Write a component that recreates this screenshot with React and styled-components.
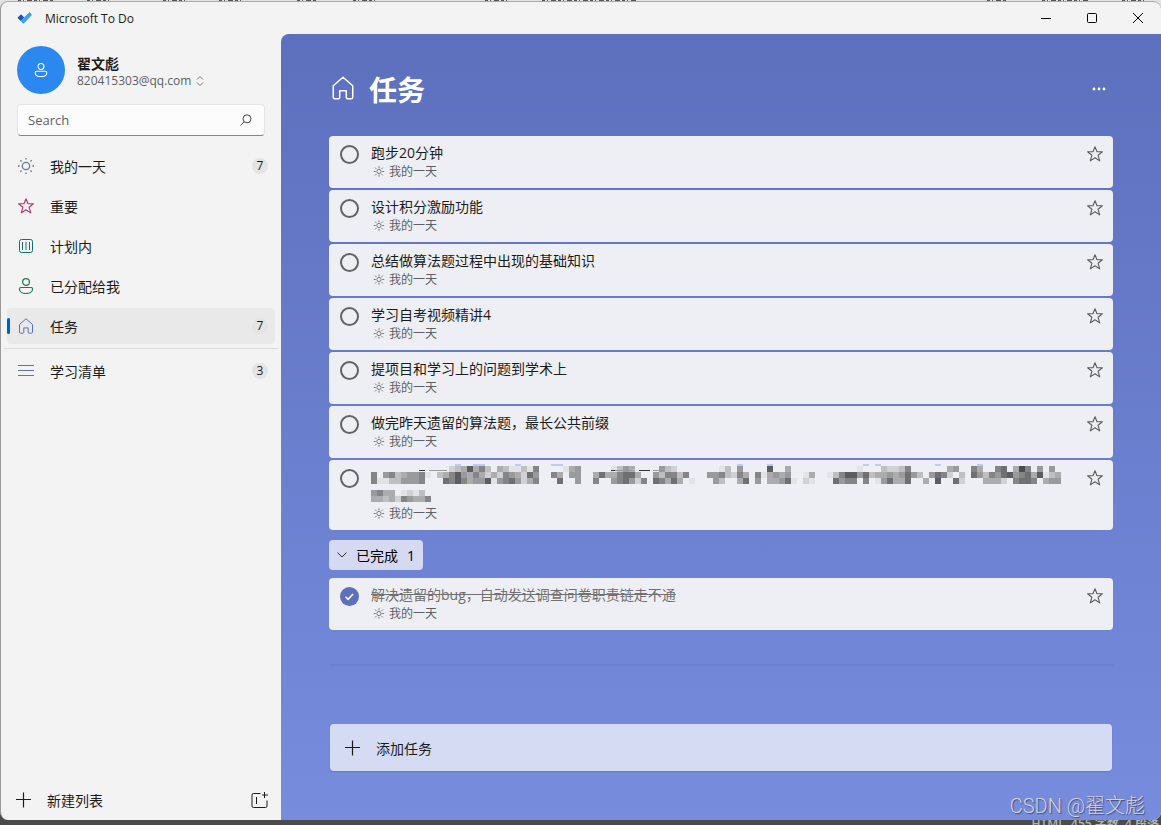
import React, {useState} from 'react';
import styled, {createGlobalStyle} from 'styled-components';

const GlobalStyle = createGlobalStyle`
  * {
    box-sizing: border-box;
  }
  body {
    margin: 0;
    font-family: "Open Sans", "Noto Sans CJK SC", sans-serif;
    font-size: 14px;
    color: #1b1b1b;
  }
  button, input {
    font: inherit;
    color: inherit;
  }
  button {
    padding: 0;
    border: none;
    background: none;
    cursor: pointer;
  }
`;

const Desktop = styled.div`
  display: flex;
  flex-direction: column;
  min-height: 100vh;
  background: linear-gradient(#e2e2e2 50%, #4b4b4b 50%);
`;

const TopStrip = styled.div`
  height: 1px;
  overflow: hidden;
`;

const BottomStrip = styled.div`
  display: flex;
  justify-content: flex-end;
  height: 5px;
  padding-right: 2px;
  overflow: hidden;
  font-size: 12px;
  font-weight: 600;
  line-height: 8px;
  color: #b4b4b4;
  white-space: pre;
`;

const Window = styled.div`
  position: relative;
  flex: 1;
  display: flex;
  flex-direction: column;
  border-top: 1px solid #aaa;
  border-left: 1px solid #999;
  border-radius: 8px;
  background: #f3f3f3;
  overflow: hidden;
`;

const TitleBar = styled.header`
  display: flex;
  align-items: center;
  height: 32px;
  padding-left: 16px;
  font-size: 12px;
`;

const AppName = styled.span`
  flex: 1;
  margin-left: 12px;
`;

const WindowButton = styled.button`
  display: flex;
  align-items: center;
  justify-content: center;
  width: 46px;
  height: 32px;
`;

const Body = styled.div`
  flex: 1;
  display: flex;
`;

const Sidebar = styled.aside`
  flex: none;
  display: flex;
  flex-direction: column;
  width: 280px;
  padding: 12px 6px 0;
`;

const Account = styled.button`
  display: flex;
  align-items: center;
  gap: 12px;
  margin: 0 10px;
  text-align: left;
`;

const Avatar = styled.span`
  display: flex;
  align-items: center;
  justify-content: center;
  width: 48px;
  height: 48px;
  border-radius: 50%;
  background: #2b88f0;
`;

const UserName = styled.strong`
  display: block;
  padding-top: 3px;
  font-size: 14px;
  line-height: 18px;
`;

const Email = styled.span`
  display: flex;
  align-items: center;
  gap: 4px;
  font-size: 12px;
  line-height: 16px;
  color: #606060;
`;

const SearchBox = styled.label`
  display: flex;
  align-items: center;
  height: 32px;
  margin: 10px 10px 12px;
  padding: 0 12px 0 10px;
  border: 1px solid #e5e5e5;
  border-bottom-color: #868686;
  border-radius: 4px;
  background: #fcfcfc;
`;

const SearchInput = styled.input`
  flex: 1;
  min-width: 0;
  padding: 0;
  border: none;
  outline: none;
  background: none;
  font-size: 13px;
  &::placeholder {
    color: #606060;
    opacity: 1;
  }
`;

const Nav = styled.nav`
  flex: 1;
  display: flex;
  flex-direction: column;
  gap: 4px;
`;

const NavItem = styled.a`
  position: relative;
  display: flex;
  align-items: center;
  gap: 16px;
  height: 36px;
  padding: 0 7px 0 11px;
  border-radius: 4px;
  background: ${p => (p.$active ? '#e9e9e9' : 'transparent')};
  color: inherit;
  text-decoration: none;
  &::before {
    content: "";
    position: absolute;
    left: 0;
    width: 3px;
    height: 16px;
    border-radius: 2px;
    background: ${p => (p.$active ? '#005fb8' : 'transparent')};
  }
`;

const NavLabel = styled.span`
  flex: 1;
`;

const Count = styled.span`
  width: 16px;
  height: 16px;
  border-radius: 50%;
  background: #e4e4e4;
  font-size: 12px;
  line-height: 16px;
  text-align: center;
`;

const Divider = styled.hr`
  width: calc(100% + 6px);
  height: 1px;
  margin: 0 -3px;
  border: none;
  background: #dcdcdc;
`;

const SidebarFooter = styled.div`
  display: flex;
  align-items: center;
  justify-content: space-between;
  height: 40px;
  padding: 0 7px 0 8px;
`;

const NewList = styled.button`
  display: flex;
  align-items: center;
  gap: 16px;
`;

const NewGroup = styled.button`
  display: flex;
`;

const Main = styled.main`
  flex: 1;
  display: flex;
  flex-direction: column;
  padding: 36px 48px 49px;
  border-top-left-radius: 8px;
  background: linear-gradient(#5c70be, #788cde);
`;

const Heading = styled.div`
  display: flex;
  align-items: center;
  gap: 14px;
  height: 36px;
  margin-bottom: 30px;
  padding: 0 6px 0 2px;
  color: #fff;
`;

const Title = styled.h1`
  flex: 1;
  margin: 0;
  padding-top: 4px;
  font-size: 28px;
  line-height: 40px;
  font-weight: 700;
`;

const MoreButton = styled.button`
  display: flex;
`;

const TaskList = styled.ul`
  display: flex;
  flex-direction: column;
  gap: 2px;
  margin: 0;
  padding: 0;
  list-style: none;
`;

const TaskCard = styled.li`
  display: flex;
  align-items: flex-start;
  padding: 8px 10px 7px 11px;
  border-radius: 4px;
  background: #eeeff4;
`;

const Check = styled.input`
  appearance: none;
  flex: none;
  width: 19px;
  height: 19px;
  margin: 1px 12px 0 0;
  border: 2px solid #636363;
  border-radius: 50%;
  &:checked {
    border: none;
    background: #5c70be url("data:image/svg+xml,%3Csvg xmlns='http://www.w3.org/2000/svg' viewBox='0 0 19 19'%3E%3Cpath d='M5.5 9.8l2.6 2.6 5-5.4' fill='none' stroke='white' stroke-width='1.6'/%3E%3C/svg%3E");
  }
`;

const TaskText = styled.label`
  flex: 1;
  min-width: 0;
`;

const TaskName = styled.span`
  display: block;
  line-height: 18px;
  color: ${p => (p.$done ? '#707070' : 'inherit')};
  text-decoration: ${p => (p.$done ? 'line-through' : 'none')};
`;

const TaskMeta = styled.span`
  display: flex;
  align-items: center;
  gap: 4px;
  padding: 1px 0 0 2px;
  font-size: 12px;
  line-height: 18px;
  color: #606060;
`;

const StarButton = styled.button`
  display: flex;
  margin-top: 2px;
`;

const CompletedToggle = styled.button`
  align-self: flex-start;
  display: flex;
  align-items: center;
  gap: 9px;
  height: 30px;
  margin: 10px 0 8px;
  padding: 0 8px;
  border-radius: 4px;
  background: #d5daf2;
  color: #000;
`;

const Rule = styled.hr`
  width: 100%;
  height: 2px;
  margin: 34px 0 0;
  border: none;
  background: #6b80d2;
`;

const AddTask = styled.button`
  display: flex;
  align-items: center;
  gap: 16px;
  height: 47px;
  margin: auto 1px 0;
  padding: 0 14px;
  border-radius: 4px;
  background: #d6dbf4;
  box-shadow: 0 1px 1px rgba(0, 0, 0, 0.12);
`;

const Watermark = styled.span`
  position: absolute;
  right: 16px;
  bottom: 2px;
  font-family: Roboto, "Noto Sans CJK SC", sans-serif;
  font-size: 20px;
  font-weight: 300;
  line-height: 24px;
  color: #d3d5e2;
  text-shadow: 1px 1px 1px #444a70;
`;

const Icon = ({size = 16, box = 16, color = 'currentColor', width = 1, children}) => (
  <svg width={size} height={size} viewBox={`0 0 ${box} ${box}`} fill="none" stroke={color} strokeWidth={width} aria-hidden="true">
    {children}
  </svg>
);

const SunIcon = () => (
  <Icon color="#6b7a8c" width={1.3}>
    <circle cx="8" cy="8" r="3.7" />
    <path d="M8 0v1.600M8 14.400V16M0 8h1.600M14.400 8H16M2.300 2.300l1.200 1.200M12.500 12.500l1.200 1.200M13.700 2.300l-1.200 1.200M3.500 12.500l-1.200 1.200" />
  </Icon>
);

const SmallSunIcon = () => (
  <Icon size={12} box={12} color="#6a6a6a" width={0.9}>
    <circle cx="6" cy="5.500" r="2.100" />
    <path d="M6 .3v2M6 8.700v2M.8 5.500h2M9.200 5.500h2M2.100 1.600l1.500 1.500M8.400 7.900l1.500 1.500M9.900 1.600L8.400 3.100M3.600 7.900L2.100 9.400" />
  </Icon>
);

const StarIcon = ({color = '#5c5c5c'}) => (
  <Icon color={color} width={1.1}>
    <path strokeLinejoin="round" d="M8 .8l2 5h5.400l-4.300 3.500 1.600 5.600L8 11.700l-4.700 3.200 1.600-5.600L.6 5.800H6z" />
  </Icon>
);

const PlanIcon = () => (
  <Icon color="#14706b">
    <rect x="1.500" y="1.500" width="13" height="13" rx="2" />
    <path d="M4.500 4v8M8 4v8M11.500 4v8" />
  </Icon>
);

const PersonIcon = ({size, color = '#217a50'}) => (
  <Icon size={size} color={color} width={1.2}>
    <circle cx="8" cy="4" r="3.400" />
    <path d="M3 9.500h10c1 0 1.600.6 1.600 1.500 0 2.800-3 4.500-6.600 4.500S1.400 13.800 1.400 11c0-.9.600-1.500 1.600-1.500z" />
  </Icon>
);

const HomeIcon = ({size, color = '#5c70be', width}) => (
  <Icon size={size} color={color} width={width}>
    <path strokeLinejoin="round" d="M1.500 6.500 8 .8l6.500 5.700v7.600c0 .7-.4 1.100-1.100 1.100h-2.300c-.5 0-.9-.3-.9-.9V9.900H5.800v4.400c0 .6-.4.9-.9.9H2.600c-.7 0-1.100-.4-1.100-1.100z" />
  </Icon>
);

const ListIcon = () => (
  <Icon color="#5c70be">
    <path d="M0 2.500h16M0 7.500h16M0 12.500h16" />
  </Icon>
);

const PlusIcon = () => (
  <Icon width={1.2}>
    <path d="M8.500 .5v15M1 7.500h15" />
  </Icon>
);

const Logo = () => (
  <svg width="16" height="16" viewBox="0 0 16 16" aria-hidden="true">
    <path fill="#1b55b5" d="M3.600 4.700.9 7.300c-.3.300-.3.700 0 1l2.800 2.800 3.600-3.600-2.800-2.800c-.3-.3-.6-.3-.9 0z" />
    <path fill="#3ba0ee" d="M12.100 2.400 3.700 11.100l2.100 2.200c.4.400.9.400 1.300 0l7.500-8c.3-.3.300-.7 0-1l-1.600-1.900c-.3-.3-.6-.3-.9 0z" />
  </svg>
);

// [y, first column, darkness of each 6px cell]
const MOSAIC = [
  [0, 13, '2348463'], [0, 21, '4311316'], [0, 32, '145'], [0, 40, '1354'], [0, 48, '532'],
  [0, 58, '13.5'], [0, 66, '8..4'], [0, 81, '1'], [0, 85, '32236'], [0, 96, '45'],
  [0, 100, '64'], [0, 104, '67.496.5.5'],
  [6, 0, '6.56345561.34685464242654275'], [6, 30, '64.55'], [6, 37, '47446774'], [6, 47, '536636'],
  [6, 56, '5563264'], [6, 64, '614545'], [6, 72, '14'], [6, 76, '1368857344545753'],
  [6, 93, '5762.3'], [6, 100, '753657856748134'],
  [12, 0, '611335556'], [12, 12, '7686455815675246'], [12, 31, '7..5'], [12, 37, '6..567526'],
  [12, 47, '76474.1'], [12, 57, '53..47.5.44571'], [12, 72, '21'], [12, 77, '7566.6.157447'],
  [12, 92, '4.8..72'], [12, 102, '4442.6776.455'],
  [24, 0, '5644.1213'],
  [30, 0, '4434265446'],
];
const SHADES = ['#eeeff4', '#e2e3e6', '#d0d1d4', '#bfbfc2', '#acacaf', '#999a9c', '#858587', '#707072', '#5c5d60', '#4b4c4f'];
const TINTS = [14, 17, 18, 24, 30, 31, 61, 66, 82, 84, 94, 101];

const MosaicSvg = styled.svg`
  display: block;
  overflow: visible;
`;

const Mosaic = () => (
  <MosaicSvg width="690" height="36" viewBox="0 2 690 36" shapeRendering="crispEdges" aria-hidden="true">
    {TINTS.map(col => <rect key={col} x={col * 6} y="-2" width="6" height="2" fill="#c3caeb" />)}
    {MOSAIC.map(([y, start, row]) => row.split('').map((cell, i) => (
      cell === '.' ? null : <rect key={`${y}-${start + i}`} x={(start + i) * 6} y={y} width="6" height="6" fill={SHADES[cell]} />
    )))}
    <path stroke="#333" d="M48 4.500h6M268 4.500h11M240 4.500h6" />
    <path stroke="#999" d="M58 4.500h18M244 4.500h16M282 4.500h6" />
  </MosaicSvg>
);

const lists = [
  {name: '我的一天', icon: <SunIcon />, count: 7},
  {name: '重要', icon: <StarIcon color="#b83268" />},
  {name: '计划内', icon: <PlanIcon />},
  {name: '已分配给我', icon: <PersonIcon />},
  {name: '任务', icon: <HomeIcon />, count: 7, active: true},
];

const tasks = [
  '跑步20分钟',
  '设计积分激励功能',
  '总结做算法题过程中出现的基础知识',
  '学习自考视频精讲4',
  '提项目和学习上的问题到学术上',
  '做完昨天遗留的算法题，最长公共前缀',
  null,
];

const ListLink = ({name, icon, count, active}) => (
  <NavItem href="#" $active={active}>
    {icon}
    <NavLabel>{name}</NavLabel>
    {count && <Count>{count}</Count>}
  </NavItem>
);

const Task = ({id, name, defaultDone = false}) => {
  const [done, setDone] = useState(defaultDone);
  return (
    <TaskCard>
      <Check type="checkbox" id={id} checked={done} onChange={() => setDone(!done)} />
      <TaskText htmlFor={id}>
        {name ? <TaskName $done={done}>{name}</TaskName> : <Mosaic />}
        <TaskMeta>
          <SmallSunIcon />
          我的一天
        </TaskMeta>
      </TaskText>
      <StarButton aria-label="重要"><StarIcon /></StarButton>
    </TaskCard>
  );
};

export default function App() {
  return (
    <Desktop>
      <GlobalStyle />
      <TopStrip>
        <svg width="1161" height="1" viewBox="0 0 1161 1" stroke="#555" strokeWidth="2" strokeDasharray="3 2 1 3 5 2" style={{display: 'block'}} aria-hidden="true">
          <path d="M18 0h35M87 0h22M163 0h22M219 0h24M297 0h20M353 0h23M485 0h23M542 0h94M987 0h20M1042 0h46M1122 0h22" />
        </svg>
      </TopStrip>
      <Window>
        <TitleBar>
          <Logo />
          <AppName>Microsoft To Do</AppName>
          <WindowButton aria-label="Minimize">
            <Icon size={10} box={10} color="#000"><path d="M0 5.500h10" /></Icon>
          </WindowButton>
          <WindowButton aria-label="Maximize">
            <Icon size={10} box={10} color="#000"><rect x=".5" y=".5" width="9" height="9" rx="1" /></Icon>
          </WindowButton>
          <WindowButton aria-label="Close">
            <Icon size={10} box={10} color="#000"><path d="M0 0l10 10M10 0L0 10" /></Icon>
          </WindowButton>
        </TitleBar>
        <Body>
          <Sidebar>
            <Account>
              <Avatar><PersonIcon size={14} color="#fff" /></Avatar>
              <span>
                <UserName>翟文彪</UserName>
                <Email>
                  820415303@qq.com
                  <Icon size={10} box={10} color="#777"><path d="M2 3.500l3-3 3 3M2 6.500l3 3 3-3" /></Icon>
                </Email>
              </span>
            </Account>
            <SearchBox>
              <SearchInput type="text" placeholder="Search" aria-label="Search" />
              <Icon size={12} box={12} color="#444">
                <circle cx="7" cy="4.800" r="4" />
                <path d="M4.200 7.700L.5 11.500" />
              </Icon>
            </SearchBox>
            <Nav>
              {lists.map(list => <ListLink key={list.name} {...list} />)}
              <Divider />
              <ListLink name="学习清单" icon={<ListIcon />} count={3} />
            </Nav>
            <SidebarFooter>
              <NewList><PlusIcon />新建列表</NewList>
              <NewGroup aria-label="New group">
                <Icon size={17} box={17} color="#1b1b1b">
                  <path d="M9.500 1.500h-7a1.500 1.500 0 0 0-1.500 1.500v11a1.500 1.500 0 0 0 1.500 1.500h12a1.500 1.500 0 0 0 1.500-1.500V8.500M5.500 5v7M13.500 0v6M11 3h6" />
                </Icon>
              </NewGroup>
            </SidebarFooter>
          </Sidebar>
          <Main>
            <Heading>
              <HomeIcon size={24} color="#fff" />
              <Title>任务</Title>
              <MoreButton aria-label="More">
                <svg width="16" height="16" viewBox="0 0 16 16" fill="#fff" aria-hidden="true">
                  <circle cx="3" cy="9" r="1.400" />
                  <circle cx="8" cy="9" r="1.400" />
                  <circle cx="13" cy="9" r="1.400" />
                </svg>
              </MoreButton>
            </Heading>
            <TaskList>
              {tasks.map((name, i) => <Task key={i} id={`task-${i}`} name={name} />)}
            </TaskList>
            <CompletedToggle>
              <Icon size={10} box={10} color="#333"><path d="M.5 2.500L5 7 9.500 2.500" /></Icon>
              <span>已完成</span>
              <span>1</span>
            </CompletedToggle>
            <TaskList>
              <Task id="done-0" name="解决遗留的bug，自动发送调查问卷职责链走不通" defaultDone />
            </TaskList>
            <Rule />
            <AddTask><PlusIcon />添加任务</AddTask>
          </Main>
        </Body>
        <Watermark>CSDN @翟文彪</Watermark>
      </Window>
      <BottomStrip>HTML  455 字数  4 段落</BottomStrip>
    </Desktop>
  );
}
